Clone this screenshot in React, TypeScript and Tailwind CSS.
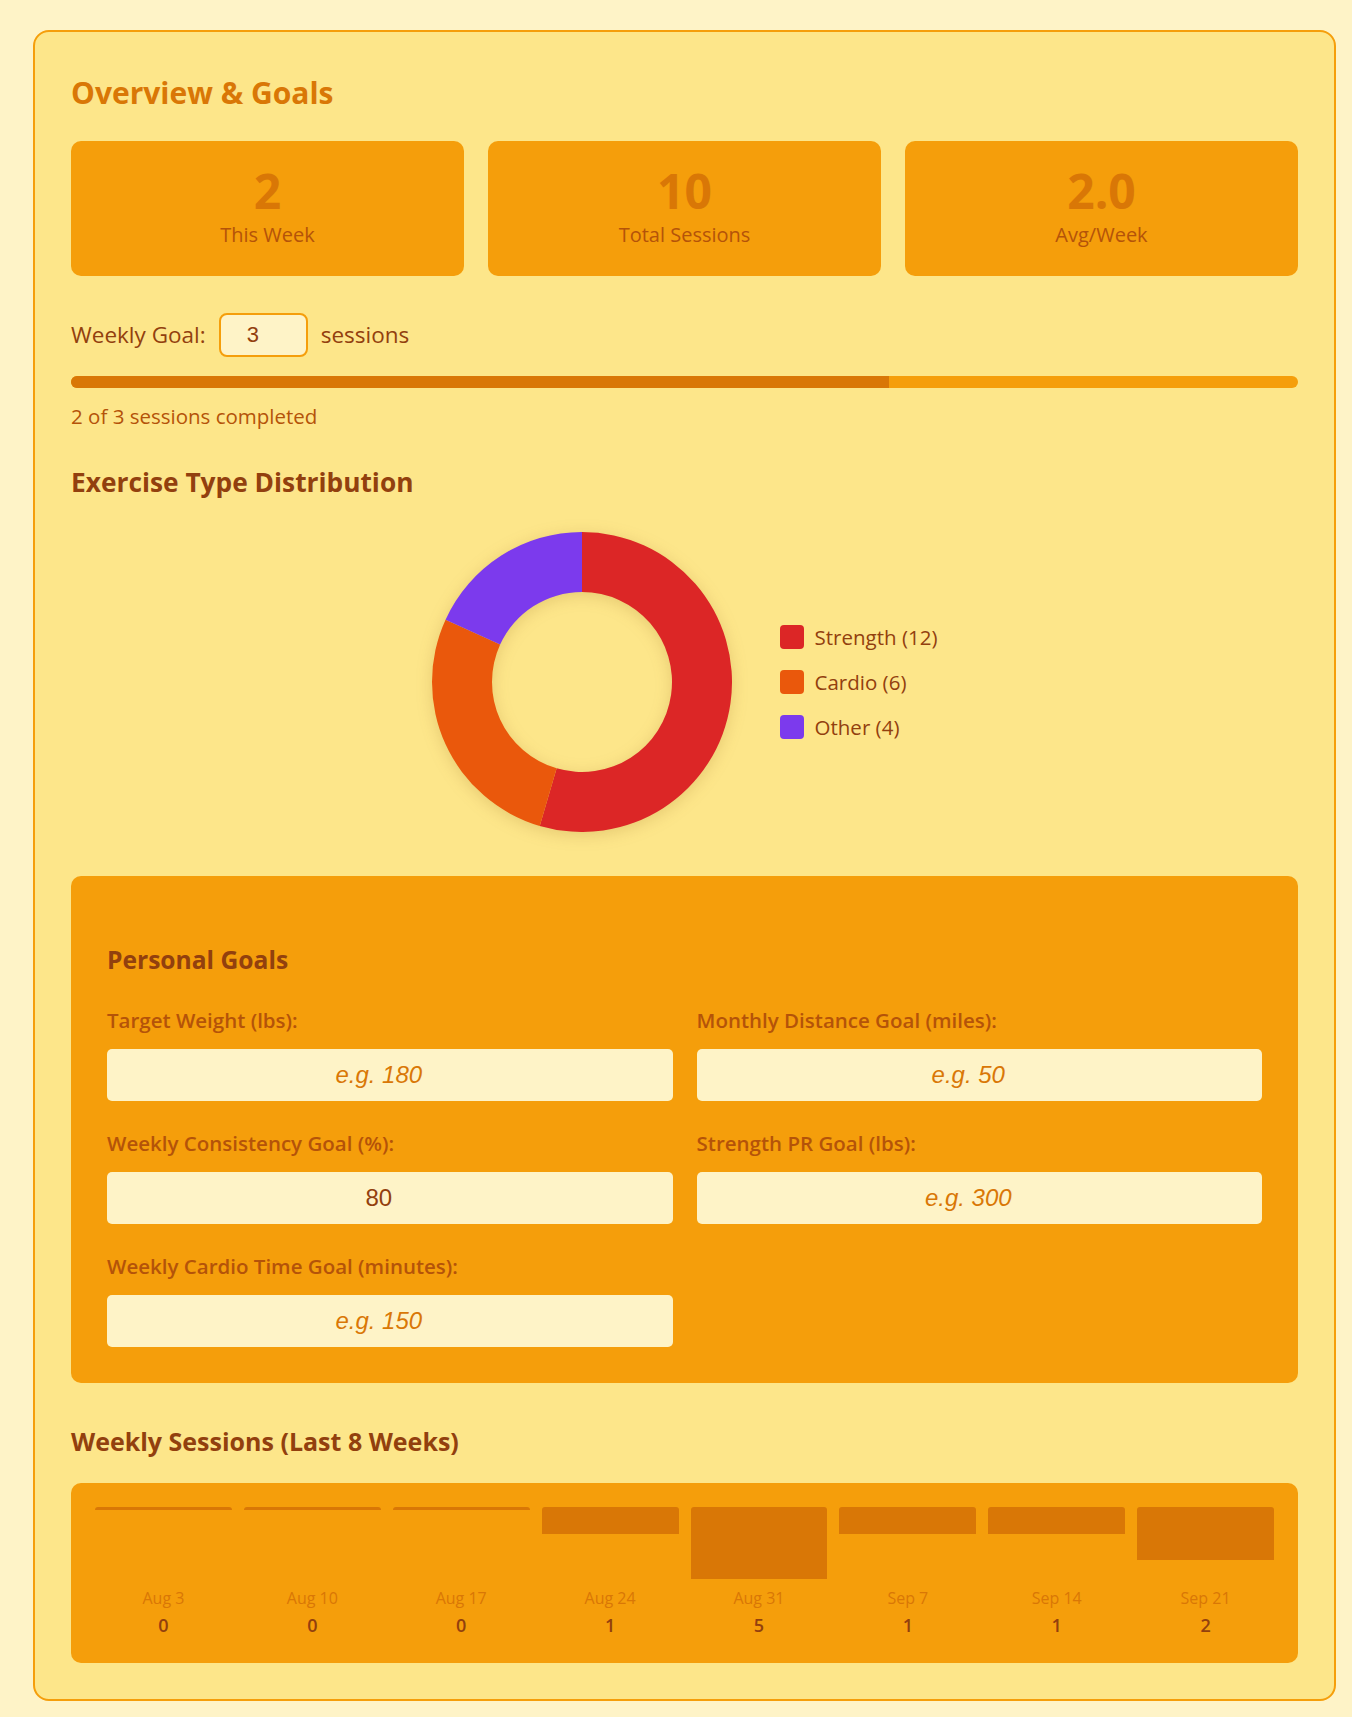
import { useState } from "react";

// Exercise type counts shown in the donut
const types = [
  { name: "Strength", count: 12, color: "#dc2626", box: "bg-[#dc2626]" },
  { name: "Cardio", count: 6, color: "#ea580c", box: "bg-[#ea580c]" },
  { name: "Other", count: 4, color: "#7c3aed", box: "bg-[#7c3aed]" },
];

const weeks = [
  { label: "Aug 3", count: 0, h: 3 },
  { label: "Aug 10", count: 0, h: 3 },
  { label: "Aug 17", count: 0, h: 3 },
  { label: "Aug 24", count: 1, h: 27 },
  { label: "Aug 31", count: 5, h: 72 },
  { label: "Sep 7", count: 1, h: 27 },
  { label: "Sep 14", count: 1, h: 27 },
  { label: "Sep 21", count: 2, h: 53 },
];

function arc(cx: number, cy: number, ro: number, ri: number, a0: number, a1: number) {
  const pt = (r: number, a: number) => {
    const rad = ((a - 90) * Math.PI) / 180;
    return [cx + r * Math.cos(rad), cy + r * Math.sin(rad)];
  };
  const large = a1 - a0 > 180 ? 1 : 0;
  const [x0, y0] = pt(ro, a0);
  const [x1, y1] = pt(ro, a1);
  const [x2, y2] = pt(ri, a1);
  const [x3, y3] = pt(ri, a0);
  return `M${x0} ${y0} A${ro} ${ro} 0 ${large} 1 ${x1} ${y1} L${x2} ${y2} A${ri} ${ri} 0 ${large} 0 ${x3} ${y3} Z`;
}

function Donut() {
  const total = types.reduce((s, t) => s + t.count, 0);
  let start = 0;
  return (
    <svg width="300" height="300" viewBox="0 0 300 300" className="drop-shadow-[0_3px_8px_rgba(120,70,0,0.18)]">
      {types.map((t) => {
        const end = start + (t.count / total) * 360;
        const d = arc(150, 150, 150, 90, start, end);
        start = end;
        return <path key={t.name} d={d} fill={t.color} />;
      })}
    </svg>
  );
}

function Stat({ value, label }: { value: string; label: string }) {
  return (
    <div className="flex flex-col items-center rounded-[10px] bg-[#f59e0b] pt-[26px] pb-[27px]">
      <div className="text-[48px] leading-[48px] font-bold text-[#d97706]">{value}</div>
      <div className="mt-[6px] text-[20px] leading-[28px] text-[#b45309]">{label}</div>
    </div>
  );
}

function GoalField({ label, placeholder, value }: { label: string; placeholder: string; value?: string }) {
  return (
    <div className="flex flex-col">
      <label className="text-[20.5px] leading-[28px] font-semibold text-[#b45309]">{label}</label>
      <input
        type="text"
        defaultValue={value}
        placeholder={placeholder}
        className="mt-[15px] h-[52px] w-full rounded-[5px] bg-[#fef3c7] pr-[22px] text-center font-['Liberation_Sans',Arial,sans-serif] text-[24px] text-[#92400e] outline-none placeholder:italic placeholder:text-[#d97706]"
      />
    </div>
  );
}

export default function App() {
  const [goal, setGoal] = useState("3");
  const done = 2;
  const target = Number(goal) || 1;
  const pct = Math.min(100, (done / target) * 100);

  return (
    <div className="min-h-screen bg-[#fef3c7] pt-[30px] pl-[33px] pr-[16px] pb-[16px] font-['Open_Sans',sans-serif]">
      <div className="w-[1303px] rounded-[16px] border-2 border-[#f59e0b] bg-[#fde68a] px-[36px] pt-[43px] pb-[36px]">
        <h2 className="text-[30px] leading-[36px] font-bold text-[#d97706]">Overview &amp; Goals</h2>

        <div className="mt-[30px] grid grid-cols-3 gap-[24px]">
          <Stat value="2" label="This Week" />
          <Stat value="10" label="Total Sessions" />
          <Stat value="2.0" label="Avg/Week" />
        </div>

        <div className="mt-[37px] flex items-center gap-[13px] text-[22.5px] text-[#92400e]">
          <span>Weekly Goal:</span>
          <input
            type="text"
            value={goal}
            onChange={(e) => setGoal(e.target.value)}
            className="h-[44px] w-[89px] rounded-[8px] border-2 border-[#f59e0b] bg-[#fef3c7] pl-[26px] font-['Liberation_Sans',Arial,sans-serif] text-[22px] text-[#92400e] outline-none"
          />
          <span>sessions</span>
        </div>

        <div className="mt-[19px] h-[12px] w-full overflow-hidden rounded-full bg-[#f59e0b]">
          <div className="h-full bg-[#d97706]" style={{ width: `${pct}%` }} />
        </div>
        <p className="mt-[14px] text-[20.5px] leading-[28px] text-[#b45309]">
          {done} of {goal} sessions completed
        </p>

        <h3 className="mt-[35px] text-[26.3px] leading-[34px] font-bold text-[#92400e]">Exercise Type Distribution</h3>
        <div className="mt-[33px] flex items-center justify-center gap-[48px]">
          <Donut />
          <ul className="flex flex-col gap-[17px]">
            {types.map((t) => (
              <li key={t.name} className="flex h-[28px] items-center gap-[11px] text-[20.5px] text-[#92400e]">
                <span className={`h-[24px] w-[24px] rounded-[4px] ${t.box}`} />
                {t.name} ({t.count})
              </li>
            ))}
          </ul>
        </div>

        <div className="mt-[44px] rounded-[10px] bg-[#f59e0b] px-[36px] pt-[68px] pb-[36px]">
          <h3 className="text-[24.6px] leading-[32px] font-bold text-[#92400e]">Personal Goals</h3>
          <div className="mt-[30px] grid grid-cols-2 gap-x-[24px] gap-y-[28px]">
            <GoalField label="Target Weight (lbs):" placeholder="e.g. 180" />
            <GoalField label="Monthly Distance Goal (miles):" placeholder="e.g. 50" />
            <GoalField label="Weekly Consistency Goal (%):" placeholder="e.g. 80" value="80" />
            <GoalField label="Strength PR Goal (lbs):" placeholder="e.g. 300" />
            <GoalField label="Weekly Cardio Time Goal (minutes):" placeholder="e.g. 150" />
          </div>
        </div>

        <h3 className="mt-[42px] text-[25px] leading-[32px] font-bold text-[#92400e]">Weekly Sessions (Last 8 Weeks)</h3>
        <div className="mt-[26px] grid grid-cols-8 gap-[12px] rounded-[10px] bg-[#f59e0b] px-[24px] pt-[24px] pb-[26px]">
          {weeks.map((w) => (
            <div key={w.label} className="flex flex-col items-center">
              <div className="flex h-[79px] w-full items-start">
                <div className="w-full rounded-t-[3px] bg-[#d97706]" style={{ height: w.h }} />
              </div>
              <div className="text-[16px] leading-[24px] text-[#d97706]">{w.label}</div>
              <div className="mt-[3px] text-[18px] leading-[24px] font-semibold text-[#92400e]">{w.count}</div>
            </div>
          ))}
        </div>
      </div>
    </div>
  );
}
